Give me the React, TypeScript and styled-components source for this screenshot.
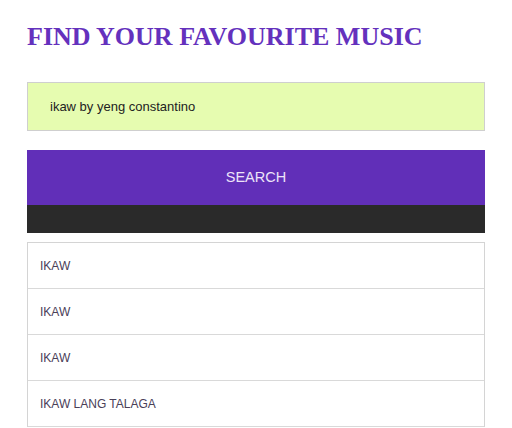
import React from "react";
import styled, { createGlobalStyle } from "styled-components";

const Global = createGlobalStyle`
  html, body { margin: 0; padding: 0; background: #ffffff; }
  body { font-family: "Liberation Sans", Arial, sans-serif; }
`;

const Page = styled.div`
  padding: 0 27px 0 27px;
  display: flex;
  flex-direction: column;
`;

const Title = styled.h1`
  margin: 21px 0 0 0;
  font-family: "Liberation Serif", "Times New Roman", serif;
  font-weight: bold;
  font-size: 26px;
  line-height: 32px;
  color: #6431bd;
  letter-spacing: 0;
`;

const SearchInput = styled.input`
  margin-top: 29px;
  height: 49px;
  box-sizing: border-box;
  border: 1px solid #cfcfcf;
  background: #e6fcb0;
  padding: 0 0 0 22px;
  font-family: "Liberation Sans", Arial, sans-serif;
  font-size: 13px;
  color: #222;
  outline: none;
  width: 100%;
`;

const SearchButton = styled.button`
  margin-top: 19px;
  height: 55px;
  border: none;
  background: #612fb8;
  color: #ece4f8;
  font-family: "Liberation Sans", Arial, sans-serif;
  font-size: 14.5px;
  width: 100%;
  cursor: pointer;
  padding: 0 0 2px 0;
`;

const DarkBar = styled.div`
  height: 28px;
  background: #2a2a2a;
`;

const ResultList = styled.ul`
  list-style: none;
  margin: 9px 0 0 0;
  padding: 0;
  border: 1px solid #d4d4d4;
  border-bottom: none;
`;

const ResultItem = styled.li`
  height: 46px;
  box-sizing: border-box;
  border-bottom: 1px solid #d9d9d9;
  display: flex;
  align-items: center;
  padding: 0 0 0 12px;
  font-family: "Liberation Sans", Arial, sans-serif;
  font-size: 12px;
  color: #4a4058;
`;

const results = ["IKAW", "IKAW", "IKAW", "IKAW LANG TALAGA"];

export default function App() {
  return (
    <>
      <Global />
      <Page>
        <Title>FIND YOUR FAVOURITE MUSIC</Title>
        <SearchInput defaultValue="ikaw by yeng constantino" />
        <SearchButton>SEARCH</SearchButton>
        <DarkBar />
        <ResultList>
          {results.map((r, i) => (
            <ResultItem key={i}>{r}</ResultItem>
          ))}
        </ResultList>
      </Page>
    </>
  );
}
